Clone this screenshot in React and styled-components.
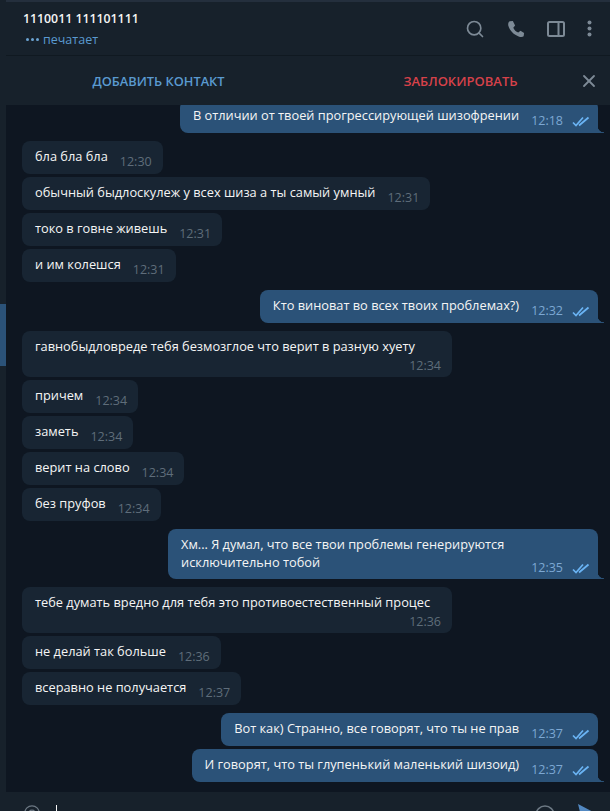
import React from "react";
import styled, { createGlobalStyle } from "styled-components";
import { Search, X } from "lucide-react";

const Global = createGlobalStyle`
  html, body {
    margin: 0;
    height: 100%;
    overflow: hidden;
    background: #0e1621;
  }
`;

const Window = styled.div`
  display: flex;
  align-items: flex-start;
  width: 610px;
  height: 811px;
  overflow: hidden;
  font-family: "Open Sans", "Liberation Sans", sans-serif;
  font-size: 12.8px;
  color: #f5f5f5;
`;

const Rail = styled.div`
  flex: none;
  width: 6px;
  height: 100%;
  box-sizing: border-box;
  padding-top: 304px;
  background: #17212b;
`;

const RailActive = styled.div`
  height: 62px;
  background: #2b5278;
`;

/* taller than the window on purpose: the composer runs off the bottom of the shot */
const Chat = styled.div`
  flex: 1;
  min-width: 0;
  height: 838px;
  box-sizing: border-box;
  display: flex;
  flex-direction: column;
  border-top: 2px solid #242f3d;
`;

const Header = styled.header`
  flex: none;
  height: 54px;
  display: flex;
  align-items: center;
  justify-content: space-between;
  padding: 0 18px 0 17px;
  background: #17212b;
  border-bottom: 1px solid #101921;
  box-sizing: border-box;
`;

const Title = styled.div`
  font-weight: 600;
  font-size: 12.3px;
  line-height: 17px;
  color: #f5f5f5;
`;

const Status = styled.div`
  display: flex;
  align-items: center;
  gap: 3px;
  margin-top: 4px;
  font-size: 12.5px;
  line-height: 17px;
  color: #5a9ad0;
`;

const Dots = styled.span`
  display: flex;
  gap: 2px;
  margin: 0 1px 0 3px;
`;

const Dot = styled.i`
  width: 3px;
  height: 3px;
  border-radius: 50%;
  background: #6ba3d2;
`;

const Actions = styled.div`
  display: flex;
  align-items: center;
  gap: 22px;
  color: #7d8a96;
`;

const ActionBar = styled.div`
  position: relative;
  flex: none;
  height: 49px;
  display: flex;
  align-items: center;
  background: #17212b;
`;

const BarButton = styled.div`
  flex: 1;
  text-align: center;
  font-weight: 600;
  font-size: ${(p) => p.$size}px;
  color: ${(p) => p.$color};
  padding-left: 3px;
`;

const CloseButton = styled.div`
  position: absolute;
  right: 11px;
  top: 15px;
  display: flex;
  color: #7d8a96;
`;

const Messages = styled.main`
  flex: 1;
  min-height: 0;
  overflow: hidden;
  display: flex;
  flex-direction: column;
  justify-content: flex-end;
  padding: 0 12px 10px 16px;
  background: #0e1621;
`;

const Bubble = styled.div`
  position: relative;
  flex: none;
  box-sizing: border-box;
  align-self: ${(p) => (p.$out ? "flex-end" : "flex-start")};
  width: ${(p) => (p.$wide ? "430px" : "auto")};
  min-height: 33px;
  margin-top: ${(p) => (p.$first ? 8 : 3)}px;
  padding: 6px ${(p) => (p.$out ? 8 : 11)}px 3px 13px;
  border-radius: 8px;
  border-bottom-right-radius: ${(p) => (p.$out && p.$tail ? 0 : 8)}px;
  background: ${(p) => (p.$out ? "#2b5278" : "#182533")};
  line-height: 18px;

  ${(p) =>
    p.$out && p.$tail
      ? `&::after {
          content: "";
          position: absolute;
          right: -6px;
          bottom: 0;
          width: 6px;
          height: 7px;
          background: radial-gradient(circle at 100% 0, transparent 6px, #2b5278 6.6px);
        }`
      : ""}
`;

const Text = styled.span`
  white-space: pre-line;
`;

const Meta = styled.span`
  float: right;
  display: inline-flex;
  align-items: center;
  gap: 9px;
  height: 16px;
  margin: ${(p) => (p.$dropped ? 3 : 7)}px 0 0 12px;
  font-size: 12.5px;
  line-height: 16px;
  color: ${(p) => (p.$out ? "#7da8d3" : "#5f6d7a")};
`;

const Composer = styled.div`
  flex: none;
  height: 46px;
  box-sizing: border-box;
  display: flex;
  align-items: flex-start;
  padding: 13px 12px 0 18px;
  background: #17212b;
`;

const Caret = styled.div`
  width: 1px;
  height: 16px;
  margin-left: 16px;
  background: #f5f5f5;
`;

const ComposerRight = styled.div`
  margin-left: auto;
  display: flex;
  gap: 21px;
`;

const SendWrap = styled.div`
  margin-top: -2px;
  display: flex;
`;

const Checks = () => (
  <svg width="18" height="11" viewBox="0 0 18 11" fill="none" stroke="#6ab3f3" strokeWidth="1.7">
    <path d="M1 6.5 L4 9.5 L11 1.5" />
    <path d="M7 9.5 L16.5 1.5" />
  </svg>
);

const PhoneIcon = () => (
  <svg width="18" height="18" viewBox="0 0 20 20" fill="currentColor">
    <path d="M3 1.5 L6.5 1 L9 6 L7 8.5 C8 11 10 13 12.5 14 L15 12 L19 14.5 L18.5 18 C17.5 19 15.5 19 13.5 18.5 C7.5 16.5 3 12 1.5 6.5 C1 4.5 1.5 2.5 3 1.5 Z" />
  </svg>
);

const PanelIcon = () => (
  <svg width="18" height="16" viewBox="0 0 18 16" fill="none" stroke="currentColor" strokeWidth="2">
    <rect x="1" y="1" width="16" height="14" rx="1.5" />
    <path d="M11.5 1v14" />
  </svg>
);

const MoreIcon = () => (
  <svg width="5" height="17" viewBox="0 0 5 17" fill="currentColor">
    <circle cx="2.5" cy="2.5" r="2" />
    <circle cx="2.5" cy="8.5" r="2" />
    <circle cx="2.5" cy="14.5" r="2" />
  </svg>
);

const RingIcon = ({ size, inner }) => (
  <svg width={size} height={size} viewBox="0 0 20 20" fill="none" stroke="#6c7883" strokeWidth="1.6">
    <circle cx="10" cy="10" r="9" />
    {inner && <circle cx="10" cy="10" r="3.5" />}
  </svg>
);

const SendIcon = () => (
  <svg width="22" height="22" viewBox="0 0 22 22" fill="#5288c1">
    <path d="M2 1 L21 11 L2 21 L4 13 L13 11 L4 9 Z" />
  </svg>
);

const messages = [
  { out: true, tail: true, text: "В отличии от твоей прогрессирующей шизофрении", time: "12:18" },
  { first: true, text: "бла бла бла", time: "12:30" },
  { text: "обычный быдлоскулеж у всех шиза а ты самый умный", time: "12:31" },
  { text: "токо в говне живешь", time: "12:31" },
  { text: "и им колешся", time: "12:31" },
  { first: true, out: true, tail: true, text: "Кто виноват во всех твоих проблемах?)", time: "12:32" },
  { first: true, wide: true, dropped: true, text: "гавнобыдловреде тебя безмозглое что верит в разную хуету", time: "12:34" },
  { text: "причем", time: "12:34" },
  { text: "заметь", time: "12:34" },
  { text: "верит на слово", time: "12:34" },
  { text: "без пруфов", time: "12:34" },
  {
    first: true,
    out: true,
    tail: true,
    wide: true,
    text: "Хм... Я думал, что все твои проблемы генерируются\nисключительно тобой",
    time: "12:35",
  },
  { first: true, wide: true, dropped: true, text: "тебе думать вредно для тебя это противоестественный процес", time: "12:36" },
  { text: "не делай так больше", time: "12:36" },
  { text: "всеравно не получается", time: "12:37" },
  { first: true, out: true, text: "Вот как) Странно, все говорят, что ты не прав", time: "12:37" },
  { out: true, tail: true, text: "И говорят, что ты глупенький маленький шизоид)", time: "12:37" },
];

function Message({ m }) {
  return (
    <Bubble $out={m.out} $first={m.first} $tail={m.tail} $wide={m.wide}>
      <Text>{m.text}</Text>
      <Meta $out={m.out} $dropped={m.dropped}>
        {m.time}
        {m.out && <Checks />}
      </Meta>
    </Bubble>
  );
}

export default function App() {
  return (
    <Window>
      <Global />
      <Rail>
        <RailActive />
      </Rail>
      <Chat>
        <Header>
          <div>
            <Title>1110011 111101111</Title>
            <Status>
              <Dots>
                <Dot />
                <Dot />
                <Dot />
              </Dots>
              печатает
            </Status>
          </div>
          <Actions>
            <Search size={20} strokeWidth={2} />
            <PhoneIcon />
            <PanelIcon />
            <MoreIcon />
          </Actions>
        </Header>
        <ActionBar>
          <BarButton $color="#5a9ad0" $size={12.8}>ДОБАВИТЬ КОНТАКТ</BarButton>
          <BarButton $color="#d6414a" $size={13}>ЗАБЛОКИРОВАТЬ</BarButton>
          <CloseButton>
            <X size={20} strokeWidth={2.2} />
          </CloseButton>
        </ActionBar>
        <Messages>
          {messages.map((m, i) => (
            <Message key={i} m={m} />
          ))}
        </Messages>
        <Composer>
          <RingIcon size={16} inner />
          <Caret />
          <ComposerRight>
            <RingIcon size={20} />
            <SendWrap>
              <SendIcon />
            </SendWrap>
          </ComposerRight>
        </Composer>
      </Chat>
    </Window>
  );
}
